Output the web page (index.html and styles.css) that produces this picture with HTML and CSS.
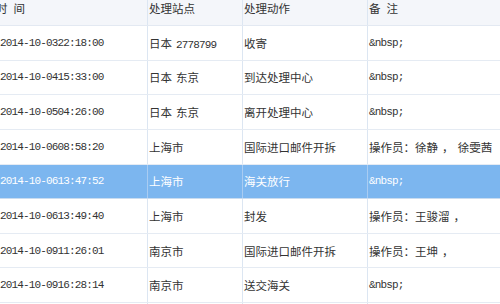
FILE: index.html
```html
<!DOCTYPE html>
<html lang="zh-CN">
<head>
<meta charset="utf-8">
<title>邮件跟踪</title>
<link rel="stylesheet" href="styles.css">
</head>
<body>
<div class="grid">
  <div class="row head">
    <div class="cell first"><span class="shift">时 间</span></div>
    <div class="cell">处理站点</div>
    <div class="cell">处理动作</div>
    <div class="cell">备 注</div>
  </div>
  <div class="row">
    <div class="cell first mono">2014-10-0322:18:00</div>
    <div class="cell"><span>日本 <span class="mono">2778799</span></span></div>
    <div class="cell">收寄</div>
    <div class="cell mono">&amp;nbsp;</div>
  </div>
  <div class="row">
    <div class="cell first mono">2014-10-0415:33:00</div>
    <div class="cell">日本 东京</div>
    <div class="cell">到达处理中心</div>
    <div class="cell mono">&amp;nbsp;</div>
  </div>
  <div class="row">
    <div class="cell first mono">2014-10-0504:26:00</div>
    <div class="cell">日本 东京</div>
    <div class="cell">离开处理中心</div>
    <div class="cell mono">&amp;nbsp;</div>
  </div>
  <div class="row">
    <div class="cell first mono">2014-10-0608:58:20</div>
    <div class="cell">上海市</div>
    <div class="cell">国际进口邮件开拆</div>
    <div class="cell">操作员：徐静 ， 徐雯茜</div>
  </div>
  <div class="row selected">
    <div class="cell first mono">2014-10-0613:47:52</div>
    <div class="cell">上海市</div>
    <div class="cell">海关放行</div>
    <div class="cell mono">&amp;nbsp;</div>
  </div>
  <div class="row">
    <div class="cell first mono">2014-10-0613:49:40</div>
    <div class="cell">上海市</div>
    <div class="cell">封发</div>
    <div class="cell">操作员：王骏溜 ，</div>
  </div>
  <div class="row">
    <div class="cell first mono">2014-10-0911:26:01</div>
    <div class="cell">南京市</div>
    <div class="cell">国际进口邮件开拆</div>
    <div class="cell">操作员：王坤 ，</div>
  </div>
  <div class="row">
    <div class="cell first mono">2014-10-0916:28:14</div>
    <div class="cell">南京市</div>
    <div class="cell">送交海关</div>
    <div class="cell mono">&amp;nbsp;</div>
  </div>
  <div class="row">
    <div class="cell first"></div>
    <div class="cell"></div>
    <div class="cell"></div>
    <div class="cell"></div>
  </div>
</div>
</body>
</html>
```

FILE: styles.css
```css
html, body {
  margin: 0;
  padding: 0;
  background: #ffffff;
  overflow: hidden;
}

.grid {
  width: 500px;
  font-family: "Noto Sans CJK SC", "Noto Sans", sans-serif;
  font-size: 11.5px;
  color: #333333;
  word-spacing: 1.5px;
}

.row {
  display: grid;
  grid-template-columns: 147px 95px 125px 1fr;
  height: 34.625px;
  box-sizing: border-box;
  border-bottom: 1px solid #e5ebf3;
  background: #ffffff;
}

.row.head {
  height: 26px;
  background: #f4f6fa;
  border-bottom: 1px solid #e3e9f2;
  word-spacing: 3.5px;
}

.row.head .cell {
  align-items: flex-start;
  line-height: 17px;
}

.row.selected {
  background: #7cb6ef;
  color: #ffffff;
  border-bottom-color: #c9dcf0;
}

.cell {
  display: flex;
  align-items: center;
  padding-left: 1px;
  border-left: 1px solid #dce6f2;
  white-space: nowrap;
  overflow: hidden;
}

.cell.first {
  border-left: none;
  padding-left: 0;
}

.row.selected .cell {
  border-left-color: #a9ccf2;
}

.shift {
  margin-left: -4px;
}

.mono {
  font-family: "Liberation Mono", "DejaVu Sans Mono", monospace;
  font-size: 11px;
  letter-spacing: -0.85px;
  word-spacing: 0;
}
```
